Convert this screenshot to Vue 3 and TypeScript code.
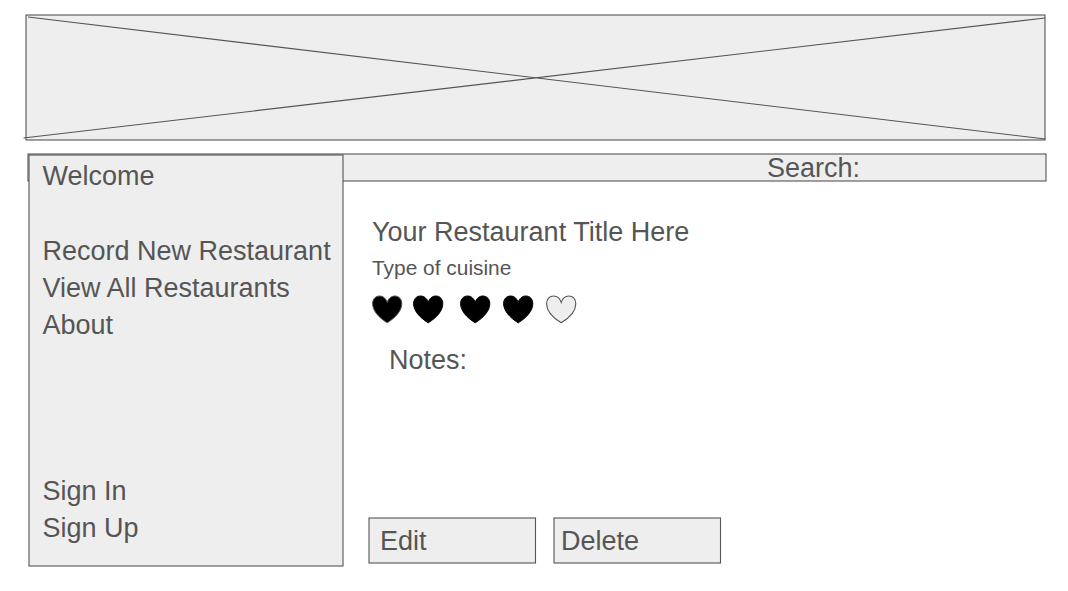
<script setup lang="ts">
interface Heart {
  id: number
  kind: 'first' | 'full' | 'empty'
}

const primaryLinks: string[] = ['Record New Restaurant', 'View All Restaurants', 'About']
const accountLinks: string[] = ['Sign In', 'Sign Up']
const hearts: Heart[] = [
  { id: 1, kind: 'first' },
  { id: 2, kind: 'full' },
  { id: 3, kind: 'full' },
  { id: 4, kind: 'full' },
  { id: 5, kind: 'empty' },
]
const heartPath =
  'M15.2 7.4 C16.4 3.6 19.2 1 22.8 1 C27 1 29.8 4.2 29.8 8.7 C29.8 15.5 24 22.4 15.2 27.8 C6.4 22.4 .6 15.5 .6 8.7 C.6 4.2 3.4 1 7.6 1 C11.2 1 14 3.6 15.2 7.4 Z'
</script>

<template>
  <div class="page">
    <header class="banner">
      <svg class="frame" width="1019" height="125">
        <rect width="1019" height="125" />
        <path d="M2 2 L1019.5 124 M-2.5 123 L1019 3" />
      </svg>
    </header>

    <div class="body">
      <div class="searchbar">
        <svg class="frame" width="1018" height="27"><rect width="1018" height="27" /></svg>
        <span class="label">Search:</span>
      </div>

      <nav class="sidebar">
        <svg class="frame" width="314" height="411"><rect width="314" height="411" /></svg>
        <div class="welcome">Welcome</div>
        <div class="links">
          <a v-for="link in primaryLinks" :key="link">{{ link }}</a>
        </div>
        <div class="account">
          <a v-for="link in accountLinks" :key="link">{{ link }}</a>
        </div>
      </nav>

      <main class="content">
        <h1>Your Restaurant Title Here</h1>
        <p class="cuisine">Type of cuisine</p>
        <div class="rating">
          <svg
            v-for="heart in hearts"
            :key="heart.id"
            class="heart"
            :class="heart.kind"
            width="30"
            height="28"
          >
            <path :d="heartPath" />
          </svg>
        </div>
        <p class="notes">Notes:</p>
        <div class="actions">
          <button class="edit" type="button">
            <svg class="frame" width="167" height="45"><rect width="166.5" height="45" /></svg>
            <span class="label">Edit</span>
          </button>
          <button class="delete" type="button">
            <svg class="frame" width="167" height="45"><rect width="166.5" height="45" /></svg>
            <span class="label">Delete</span>
          </button>
        </div>
      </main>
    </div>
  </div>
</template>

<style>
body {
  background: #fff;
}
</style>

<style scoped>
.page {
  box-sizing: border-box;
  width: 1068px;
  height: 591px;
  padding: 15px 0 0 26px;
  overflow: hidden;
  color: #555;
  font-family: 'Liberation Sans', Arial, sans-serif;
  font-size: 27px;
  line-height: 37px;
}
.frame {
  position: absolute;
  top: 0;
  left: 0;
  overflow: visible;
  fill: #eee;
  stroke: #555;
  stroke-width: 1.1px;
}
.label {
  position: relative;
}
.banner {
  position: relative;
  width: 1019px;
  height: 125px;
}
.body {
  display: grid;
  grid-template-columns: 315px 703px;
  grid-template-rows: 27px 386px;
  margin: 14px 0 0 2px;
}
.searchbar {
  position: relative;
  grid-area: 1 / 1 / 2 / 3;
  padding-left: 739px;
  line-height: 28px;
}
.sidebar {
  position: relative;
  grid-area: 1 / 1 / 3 / 2;
  display: flex;
  flex-direction: column;
  box-sizing: border-box;
  width: 314px;
  height: 411px;
  margin: 1px 0 0 1px;
  padding: 3px 0 19px 13.5px;
  white-space: nowrap;
}
.welcome,
.links,
.account {
  position: relative;
}
.links {
  margin-top: 38px;
}
.account {
  margin-top: auto;
}
.links a,
.account a {
  display: block;
}
.content {
  grid-area: 2 / 2 / 3 / 3;
  padding: 33px 0 0 29px;
}
h1,
p {
  margin: 0;
  font-weight: normal;
}
h1 {
  font-size: 27px;
  line-height: 37px;
}
.cuisine {
  font-size: 20.9px;
  line-height: 36px;
  margin-top: -1px;
}
.rating {
  display: flex;
  gap: 13px;
  height: 28px;
  margin-top: 9px;
}
.heart {
  overflow: visible;
  fill: #000;
  stroke: #000;
  stroke-width: 1px;
}
.heart.first {
  stroke: #555;
  margin-right: -2px;
}
.heart:nth-child(2) {
  margin-right: 4px;
}
.heart.empty {
  fill: #eee;
  stroke: #555;
  stroke-width: 1.1px;
}
.notes {
  margin: 19px 0 0 17px;
}
.actions {
  display: flex;
  gap: 18px;
  margin: 139px 0 0 -3px;
}
.actions button {
  position: relative;
  width: 167px;
  height: 45px;
  padding: 1px 0 0 11px;
  border: 0;
  background: none;
  color: inherit;
  font: inherit;
  text-align: left;
}
.actions .delete {
  padding-left: 7px;
}
</style>
